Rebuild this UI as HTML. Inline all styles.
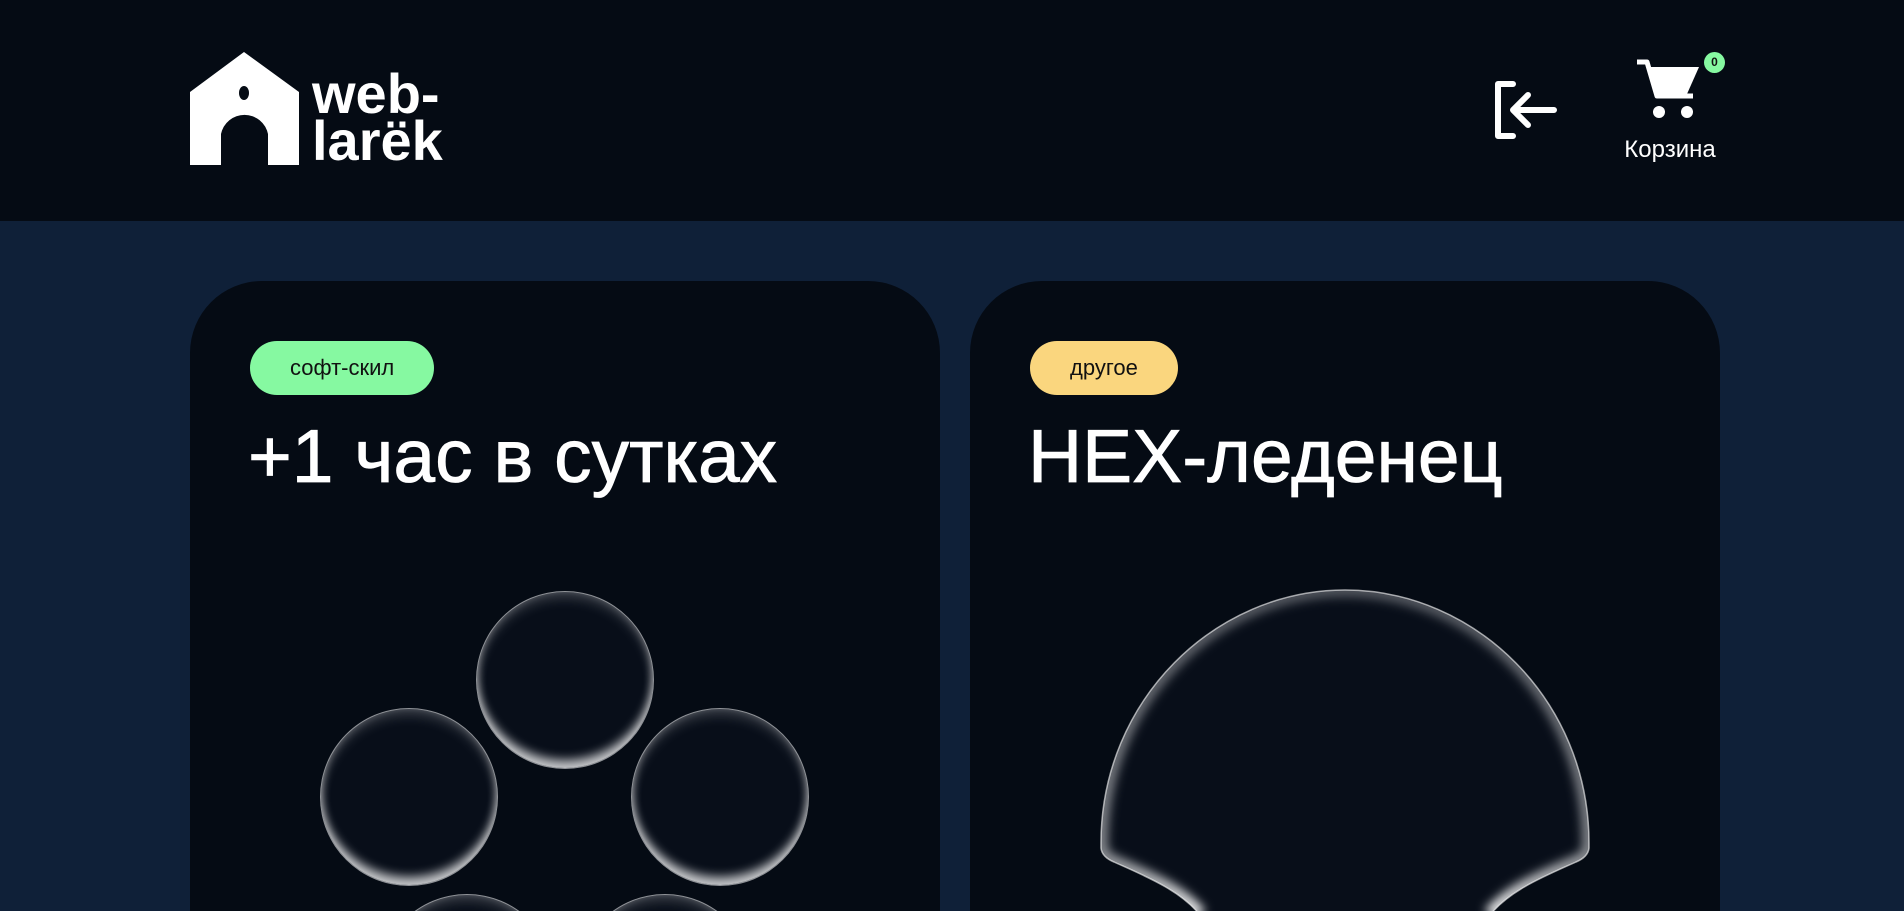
<!DOCTYPE html>
<html><head><meta charset="utf-8">
<style>
*{margin:0;padding:0;box-sizing:border-box}
html,body{width:1904px;height:911px;overflow:hidden;background:#0f2038;font-family:"Liberation Sans","DejaVu Sans",sans-serif}
.header{position:absolute;left:0;top:0;width:1904px;height:221px;background:#050b14}
.logo-text{position:absolute;left:312px;top:70px;color:#fff;font-weight:bold;font-size:56px;line-height:47px;letter-spacing:0px}
.card{position:absolute;top:281px;width:750px;height:630px;background:#050b14;border-radius:72px 72px 0 0;overflow:hidden}
.tag{position:absolute;top:60px;left:60px;height:54px;border-radius:27px;font-size:22px;line-height:54px;color:#111;padding:0 40px}
.title{position:absolute;left:58px;top:130px;color:#fff;font-size:75px;line-height:90px;white-space:nowrap;-webkit-text-stroke:0.8px #fff}
.bub{position:absolute;width:178px;height:178px;border-radius:50%;background:#080e19;border:1.5px solid rgba(255,255,255,.55);box-shadow:inset 0 -10px 10px -2px rgba(255,255,255,.75),inset 0 8px 14px -4px rgba(255,255,255,.25),inset 6px 0 10px -6px rgba(255,255,255,.3),inset -6px 0 10px -6px rgba(255,255,255,.3)}
.cart-label{position:absolute;left:1610px;top:136px;width:120px;text-align:center;color:#fff;font-size:24px}
.badge{position:absolute;left:1704px;top:52px;width:21px;height:21px;border-radius:50%;background:#86f9a1;color:#111;font-size:12px;font-weight:bold;text-align:center;line-height:21px}
</style></head><body>
<div class="header">
 <svg style="position:absolute;left:190px;top:52px" width="110" height="113" viewBox="0 0 110 113">
  <path d="M0 40 L54 0 L109 40 L109 113 L78 113 L78 82 A24 24 0 0 0 31 82 L31 113 L0 113 Z" fill="#fff"/>
  <ellipse cx="54" cy="41" rx="5" ry="7" fill="#050b14"/>
 </svg>
 <div class="logo-text">web-<br>larëk</div>
 <svg style="position:absolute;left:1493px;top:81px" width="64" height="58" viewBox="0 0 64 58">
  <path d="M20 3 H5 V55 H20" fill="none" stroke="#fff" stroke-width="6" stroke-linejoin="round" stroke-linecap="round"/>
  <path d="M61 29 H20 M35 14 L20 29 L35 44" fill="none" stroke="#fff" stroke-width="6" stroke-linecap="round" stroke-linejoin="round"/>
 </svg>
 <svg style="position:absolute;left:1635px;top:58px" width="66" height="62" viewBox="0 0 66 62">
  <path d="M2 4 H12 L22 38 H58" fill="none" stroke="#fff" stroke-width="5" stroke-linejoin="round"/>
  <path d="M12 9 H64 L52 36 H20 Z" fill="#fff"/>
  <circle cx="24" cy="54" r="6" fill="#fff"/><circle cx="52" cy="54" r="6" fill="#fff"/>
 </svg>
 <div class="badge">0</div>
 <div class="cart-label">Корзина</div>
</div>

<div class="card" style="left:190px">
 <div class="tag" style="background:#86f9a1">софт-скил</div>
 <div class="title">+1 час в сутках</div>
 <div class="bub" style="left:286px;top:310px"></div>
 <div class="bub" style="left:130px;top:427px"></div>
 <div class="bub" style="left:441px;top:427px"></div>
 <div class="bub" style="left:188px;top:613px"></div>
 <div class="bub" style="left:386px;top:613px"></div>
</div>

<div class="card" style="left:970px">
 <div class="tag" style="background:#fad67e">другое</div>
 <div class="title">HEX-леденец</div>
</div>

<svg style="position:absolute;left:0;top:0" width="1904" height="911">
 <defs>
  <clipPath id="cp"><path d="M1101 843 C1101 700 1215 590 1345 590 C1475 590 1589 700 1589 843 L1589 848 Q1588 857 1576 862 C1545 876 1510 890 1490 915 L1200 915 C1180 890 1145 876 1114 862 Q1102 857 1101 848 Z"/></clipPath>
  <linearGradient id="lg" x1="0" y1="0" x2="0" y2="1"><stop offset="0" stop-color="#fff" stop-opacity=".3"/><stop offset=".8" stop-color="#fff" stop-opacity=".5"/><stop offset="1" stop-color="#fff" stop-opacity=".95"/></linearGradient>
  <filter id="bl"><feGaussianBlur stdDeviation="5"/></filter>
 </defs>
 <path d="M1101 843 C1101 700 1215 590 1345 590 C1475 590 1589 700 1589 843 L1589 848 Q1588 857 1576 862 C1545 876 1510 890 1490 915 L1200 915 C1180 890 1145 876 1114 862 Q1102 857 1101 848 Z" fill="#080e19"/>
 <g clip-path="url(#cp)">
  <path d="M1200 915 C1180 890 1145 876 1114 862 Q1102 857 1101 848 L1101 843 C1101 700 1215 590 1345 590 C1475 590 1589 700 1589 843 L1589 848 Q1588 857 1576 862 C1545 876 1510 890 1490 915" fill="none" stroke="url(#lg)" stroke-width="14" filter="url(#bl)"/>
 </g>
 <path d="M1200 915 C1180 890 1145 876 1114 862 Q1102 857 1101 848 L1101 843 C1101 700 1215 590 1345 590 C1475 590 1589 700 1589 843 L1589 848 Q1588 857 1576 862 C1545 876 1510 890 1490 915" fill="none" stroke="rgba(255,255,255,.6)" stroke-width="1.5"/>
</svg>
</body></html>
